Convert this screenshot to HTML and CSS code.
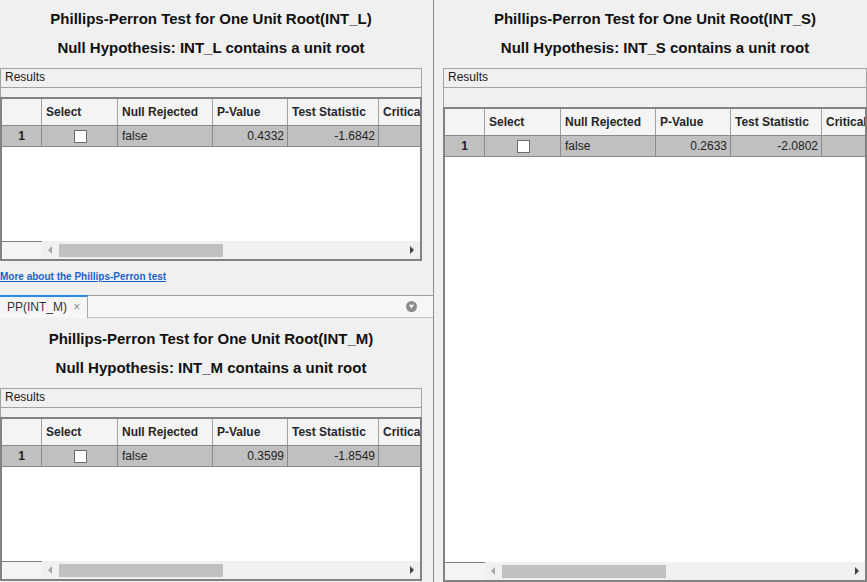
FILE: index.html
```html
<!DOCTYPE html>
<html lang="en">
<head>
    <meta charset="UTF-8">
    <title>Phillips-Perron Test</title>
    <link rel="stylesheet" href="styles.css">
</head>
<body>
    <div class="app">
        <div class="col-left">
            <div class="pane pane-top">
                <div class="pane-title">Phillips-Perron Test for One Unit Root(INT_L)</div>
                <div class="pane-subtitle">Null Hypothesis: INT_L contains a unit root</div>
                <div class="results">
                    <div class="results-label">Results</div>
                    <div class="results-gap"></div>
                    <div class="grid grid-short">
                        <div class="grid-row grid-head">
                            <div class="cell c-row"></div>
                            <div class="cell c-select">Select</div>
                            <div class="cell c-null">Null Rejected</div>
                            <div class="cell c-p">P-Value</div>
                            <div class="cell c-stat">Test Statistic</div>
                            <div class="cell c-crit">Critical Value</div>
                        </div>
                        <div class="grid-row grid-data">
                            <div class="cell c-row">1</div>
                            <div class="cell c-select"><span class="checkbox"></span></div>
                            <div class="cell c-null">false</div>
                            <div class="cell c-p num">0.4332</div>
                            <div class="cell c-stat num">-1.6842</div>
                            <div class="cell c-crit num"></div>
                        </div>
                        <div class="grid-body"></div>
                        <div class="grid-scroll">
                            <div class="scroll-corner"></div>
                            <div class="scroll-track">
                                <span class="arrow-left"></span>
                                <span class="thumb"></span>
                                <span class="arrow-right"></span>
                            </div>
                        </div>
                    </div>
                </div>
                <a class="more-link" href="#">More about the Phillips-Perron test</a>
            </div>

            <div class="tabbar">
                <div class="tab">PP(INT_M) <span class="tab-close">&times;</span></div>
                <svg class="tab-menu" width="11" height="11" viewBox="0 0 11 11">
                    <circle cx="5.5" cy="5.5" r="5.5" fill="#8c8c8c"/>
                    <polygon points="2.8,3.8 8.2,3.8 5.5,7.6" fill="#fff"/>
                </svg>
            </div>

            <div class="pane pane-bottom">
                <div class="pane-title">Phillips-Perron Test for One Unit Root(INT_M)</div>
                <div class="pane-subtitle">Null Hypothesis: INT_M contains a unit root</div>
                <div class="results">
                    <div class="results-label">Results</div>
                    <div class="results-gap"></div>
                    <div class="grid grid-short">
                        <div class="grid-row grid-head">
                            <div class="cell c-row"></div>
                            <div class="cell c-select">Select</div>
                            <div class="cell c-null">Null Rejected</div>
                            <div class="cell c-p">P-Value</div>
                            <div class="cell c-stat">Test Statistic</div>
                            <div class="cell c-crit">Critical Value</div>
                        </div>
                        <div class="grid-row grid-data">
                            <div class="cell c-row">1</div>
                            <div class="cell c-select"><span class="checkbox"></span></div>
                            <div class="cell c-null">false</div>
                            <div class="cell c-p num">0.3599</div>
                            <div class="cell c-stat num">-1.8549</div>
                            <div class="cell c-crit num"></div>
                        </div>
                        <div class="grid-body"></div>
                        <div class="grid-scroll">
                            <div class="scroll-corner"></div>
                            <div class="scroll-track">
                                <span class="arrow-left"></span>
                                <span class="thumb"></span>
                                <span class="arrow-right"></span>
                            </div>
                        </div>
                    </div>
                </div>
            </div>
        </div>

        <div class="col-right">
            <div class="pane-title">Phillips-Perron Test for One Unit Root(INT_S)</div>
            <div class="pane-subtitle">Null Hypothesis: INT_S contains a unit root</div>
            <div class="results results-tall">
                <div class="results-label">Results</div>
                <div class="results-gap results-gap-wide"></div>
                <div class="grid grid-tall">
                    <div class="grid-row grid-head">
                        <div class="cell c-row"></div>
                        <div class="cell c-select">Select</div>
                        <div class="cell c-null">Null Rejected</div>
                        <div class="cell c-p">P-Value</div>
                        <div class="cell c-stat">Test Statistic</div>
                        <div class="cell c-crit">Critical Value</div>
                    </div>
                    <div class="grid-row grid-data">
                        <div class="cell c-row">1</div>
                        <div class="cell c-select"><span class="checkbox"></span></div>
                        <div class="cell c-null">false</div>
                        <div class="cell c-p num">0.2633</div>
                        <div class="cell c-stat num">-2.0802</div>
                        <div class="cell c-crit num"></div>
                    </div>
                    <div class="grid-body"></div>
                    <div class="grid-scroll">
                        <div class="scroll-corner"></div>
                        <div class="scroll-track">
                            <span class="arrow-left"></span>
                            <span class="thumb"></span>
                            <span class="arrow-right"></span>
                        </div>
                    </div>
                </div>
            </div>
        </div>
    </div>
</body>
</html>
```

FILE: styles.css
```css
html, body {
    margin: 0;
    padding: 0;
}
body {
    background: #f0f0f0;
    color: #1a1a1a;
    font-family: "Liberation Sans", Arial, sans-serif;
    font-size: 12px;
    overflow: hidden;
}
.app {
    display: flex;
    width: 867px;
    height: 582px;
}

/* left column */
.col-left {
    width: 433px;
    flex-shrink: 0;
    border-right: 1px solid #8e8e8e;
    display: flex;
    flex-direction: column;
}
.pane {
    padding-right: 11px;
}
.pane-top {
    height: 295px;
    padding-top: 10px;
    box-sizing: border-box;
}
.pane-bottom {
    padding-top: 12px;
}

/* right column */
.col-right {
    flex: 1;
    padding-left: 9px;
    padding-top: 10px;
    display: flex;
    flex-direction: column;
    min-width: 0;
}

.pane-title,
.pane-subtitle {
    font-size: 15px;
    font-weight: bold;
    line-height: 18px;
    text-align: center;
    white-space: nowrap;
    color: #111;
}
.pane-subtitle {
    margin-top: 11px;
}

/* results panel */
.results {
    margin-top: 11px;
}
.results-tall {
    flex: 1;
    display: flex;
    flex-direction: column;
    min-height: 0;
}
.results-label {
    height: 20px;
    box-sizing: border-box;
    border: 1px solid #a3a3a3;
    padding-left: 4px;
    line-height: 17px;
    color: #1a1a1a;
}
.results-gap {
    height: 9px;
    border-left: 1px solid #a3a3a3;
    border-right: 1px solid #a3a3a3;
}
.results-gap-wide {
    height: 19px;
}

/* table */
.grid {
    border: 2px solid #828282;
    background: #fff;
    overflow: hidden;
    display: flex;
    flex-direction: column;
}
.grid-short {
    height: 164px;
    box-sizing: border-box;
}
.grid-tall {
    flex: 1;
}
.grid-row {
    display: flex;
    flex-shrink: 0;
}
.cell {
    box-sizing: border-box;
    flex-shrink: 0;
    border-right: 1px solid #8a8a8a;
    padding: 0 4px;
    white-space: nowrap;
    overflow: hidden;
}
.grid-head {
    height: 27px;
    background: #f4f4f4;
    border-bottom: 1px solid #8a8a8a;
    box-sizing: border-box;
    font-weight: bold;
    line-height: 26px;
    color: #262626;
}
.grid-head .cell {
    border-right-color: #a0a0a0;
}
.grid-data {
    height: 21px;
    background: #c0c0c0;
    border-bottom: 1px solid #8a8a8a;
    box-sizing: border-box;
    line-height: 20px;
    color: #222;
}
.c-row { width: 40px; text-align: center; font-weight: bold; }
.c-select { width: 76px; }
.c-null { width: 95px; }
.c-p { width: 75px; }
.c-stat { width: 91px; }
.c-crit { width: 90px; border-right: none; }
.num {
    text-align: right;
    padding-right: 3px;
}
.grid-data .c-select {
    display: flex;
    align-items: center;
    justify-content: center;
    padding: 0 0 0 1px;
}
.checkbox {
    width: 13px;
    height: 13px;
    box-sizing: border-box;
    border: 1px solid #6b6b6b;
    background: #fff;
}
.grid-body {
    flex: 1;
    background: #fff;
}

/* horizontal scrollbar */
.grid-scroll {
    display: flex;
    height: 18px;
    flex-shrink: 0;
}
.scroll-corner {
    width: 40px;
    border-top: 1px solid #808080;
    background: #f4f4f4;
}
.scroll-track {
    flex: 1;
    background: #f0f0f0;
    display: flex;
    align-items: center;
    padding: 0 6px;
}
.arrow-left {
    width: 0;
    height: 0;
    border-top: 4px solid transparent;
    border-bottom: 4px solid transparent;
    border-right: 4px solid #a6a6a6;
}
.thumb {
    width: 164px;
    height: 13px;
    margin-left: 7px;
    background: #c0c0c0;
}
.arrow-right {
    margin-left: auto;
    width: 0;
    height: 0;
    border-top: 4px solid transparent;
    border-bottom: 4px solid transparent;
    border-left: 4px solid #404040;
}

/* link */
.more-link {
    display: block;
    margin-top: 10px;
    font-size: 10px;
    font-weight: bold;
    line-height: 12px;
    color: #1b63cb;
    text-decoration: underline;
}

/* tab strip */
.tabbar {
    height: 21px;
    border-top: 1px solid #a0a0a0;
    border-bottom: 1px solid #c4c4c4;
    background: #f6f6f6;
    display: flex;
    align-items: center;
    justify-content: space-between;
    padding-right: 16px;
}
.tab {
    box-sizing: border-box;
    height: 23px;
    margin: -1px 0 -1px 0;
    width: 88px;
    border-top: 2px solid #2b8ae2;
    border-right: 1px solid #a8a8a8;
    background: #f6f6f6;
    padding-left: 7px;
    line-height: 20px;
    color: #333;
    white-space: nowrap;
}
.tab-close {
    margin-left: 3px;
    font-size: 12px;
    color: #8c8c8c;
}
.tab-menu {
    display: block;
}
```
